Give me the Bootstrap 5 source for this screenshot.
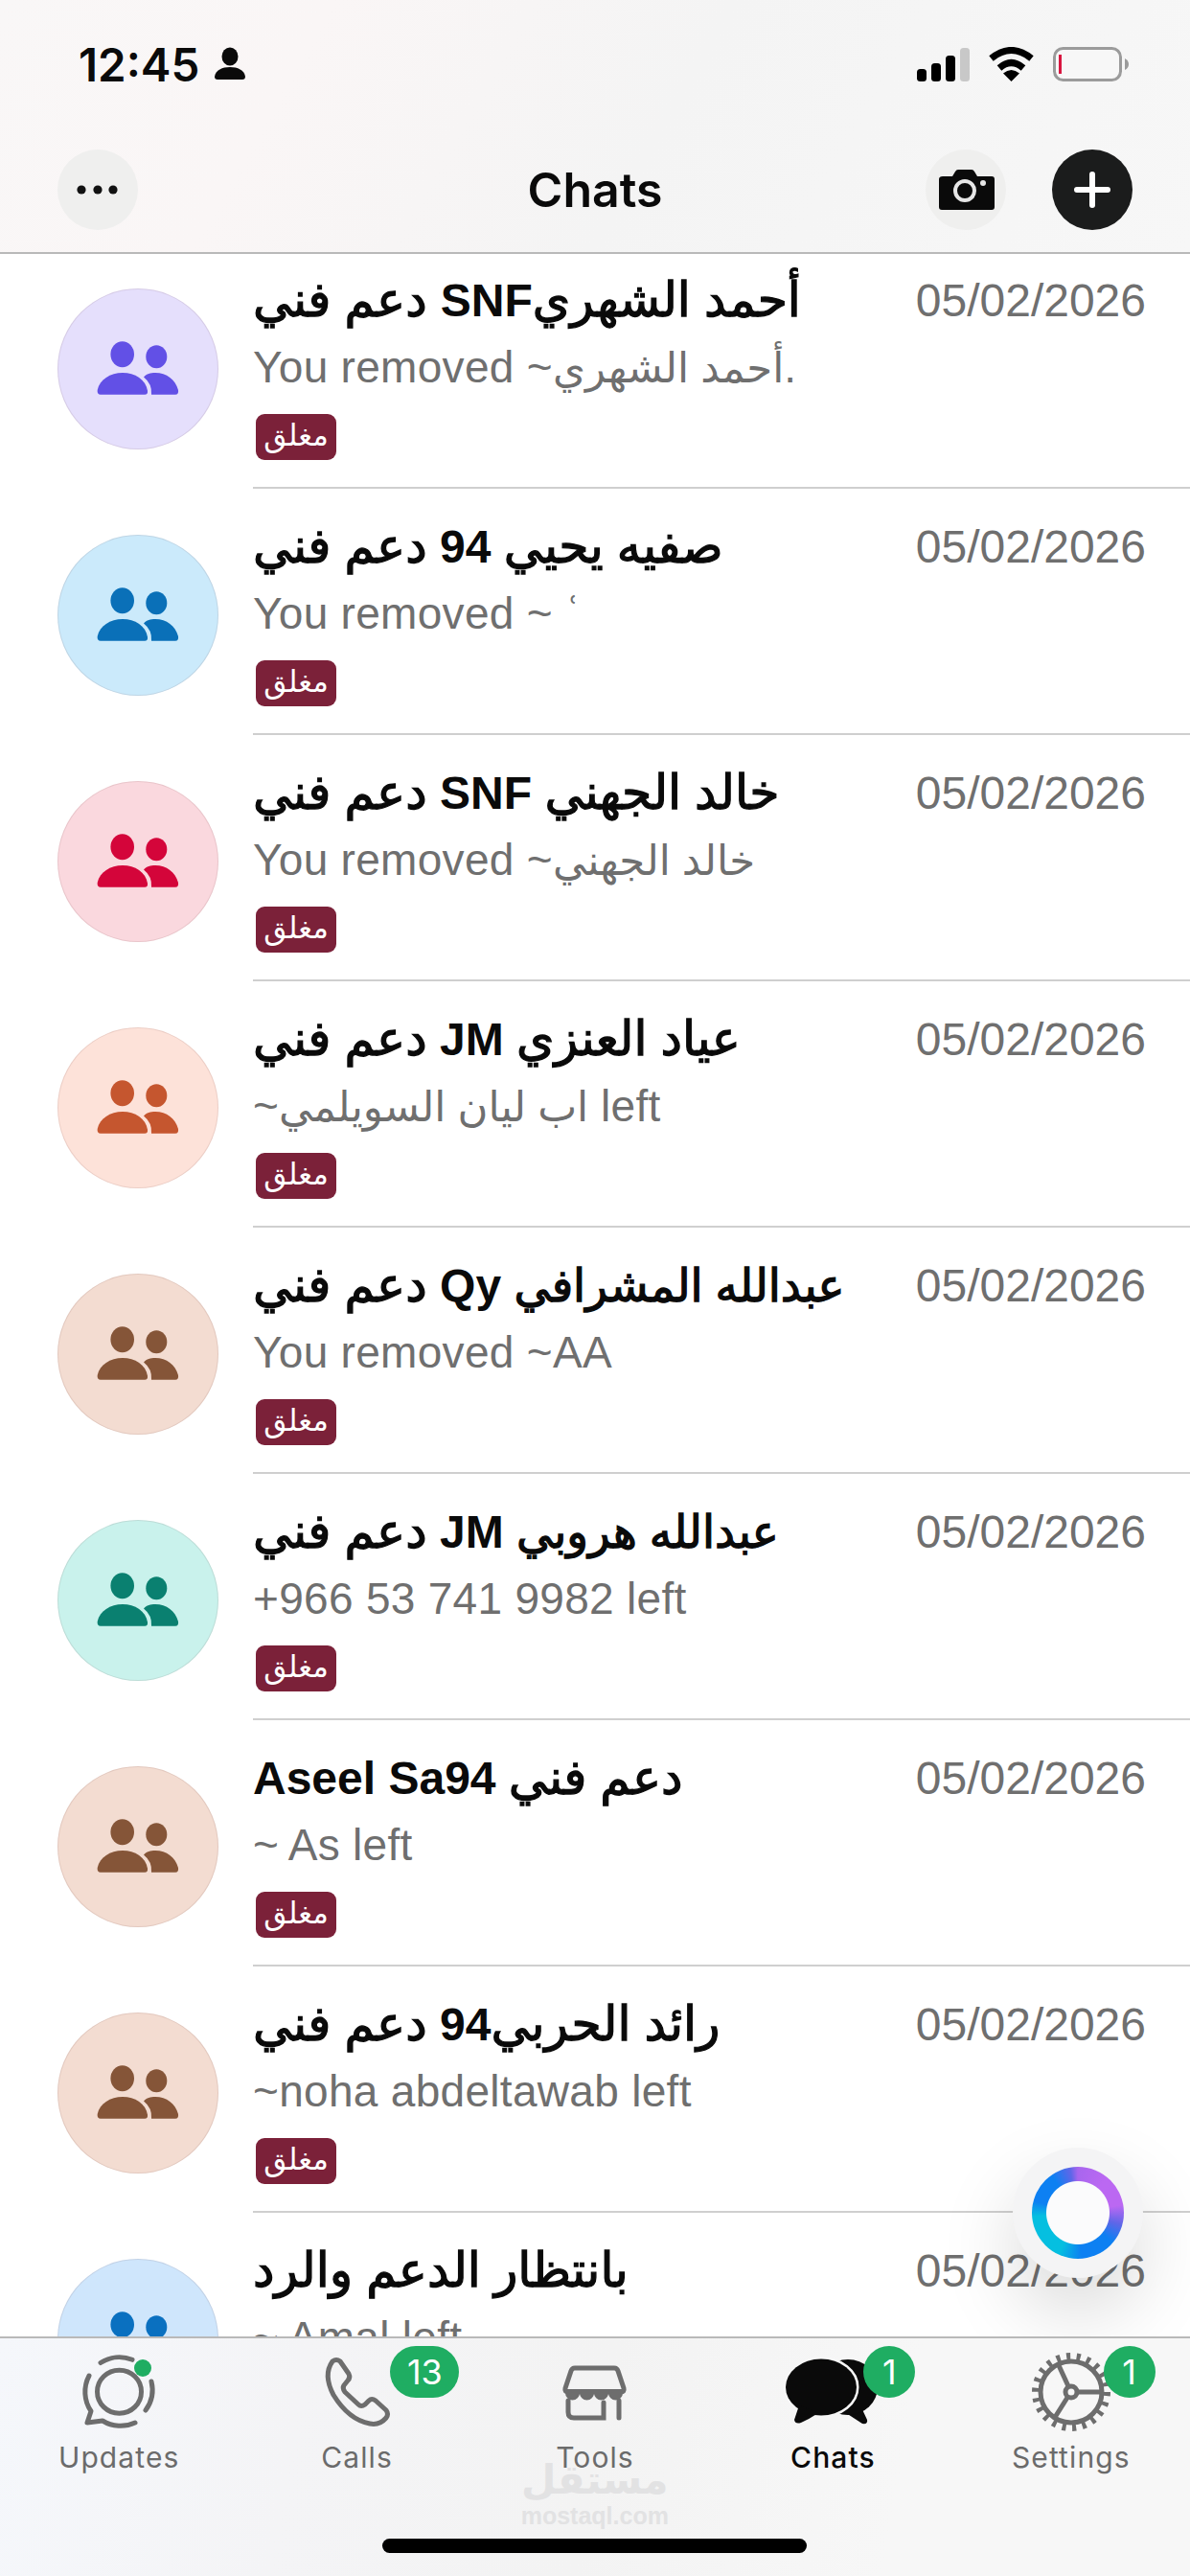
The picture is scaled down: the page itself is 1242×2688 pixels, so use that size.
<!DOCTYPE html>
<html lang="en">
<head>
<meta charset="utf-8">
<title>Chats</title>
<link href="https://cdn.jsdelivr.net/npm/bootstrap@5.3.0/dist/css/bootstrap.min.css" rel="stylesheet">
<style>
html,body{margin:0;background:#fff;}
body{font-family:"Liberation Sans","DejaVu Sans",sans-serif;}
.phone{width:1242px;height:2688px;overflow:hidden;}
.top-bar{height:265px;flex:none;position:relative;z-index:2;background:linear-gradient(120deg,#f9f7f7 0%,#faf6f6 25%,#f4f4f4 55%,#f7f7f7 100%);border-bottom:2px solid #b9b9b9;padding:49px 60px 0;}
.status-row{height:36px;}
.clock{font-family:Inter,sans-serif;font-weight:600;font-size:47.5px;line-height:38px;color:#0a0a0a;width:142px;margin-left:22px;}
.status-icons{gap:20px;margin-right:4px;}
.head-row{margin-top:71px;height:84px;position:relative;}
.round-btn{width:84px;height:84px;border-radius:50%;background:#efefee;flex:none;}
.round-btn.dark{background:#1b1c1c;}
.btn-gap{gap:48px;}
.screen-title{position:absolute;left:0;right:0;top:0;text-align:center;font-family:Inter,"Liberation Sans",sans-serif;font-weight:600;font-size:50px;line-height:84px;color:#0a0a0a;}
.chat-scroll{flex:1 1 0;min-height:0;overflow:hidden;position:relative;margin-top:-12px;}
.chat-row{height:257px;padding:0 0 0 60px;gap:36px;background:#fff;}
.avatar-disc{width:168px;height:168px;border-radius:50%;margin-top:48px;flex:none;box-shadow:inset 0 0 0 1px rgba(90,40,40,.10);}
.avatar-disc svg{display:block;}
.av-purple{background:#e5dffc;color:#6250e6;}
.av-sky{background:#cbeafb;color:#0a70b8;}
.av-red{background:#fad8de;color:#d4053a;}
.av-orange{background:#fde2d9;color:#c5562f;}
.av-brown{background:#f3dcd1;color:#855538;}
.av-teal{background:#c9f2ec;color:#0a8070;}
.av-blue{background:#cfe6fc;color:#0a70c0;}
.row-body{flex:1 1 0;min-width:0;padding:31px 46px 0 0;border-bottom:2px solid #cfcfcf;}
.chat-row:last-child .row-body{border-bottom:0;}
.name-line{font-weight:700;font-size:48px;line-height:60px;color:#0a0a0a;white-space:nowrap;}
.name-ar{font-weight:400;font-size:50.5px;-webkit-text-stroke:1.3px #0a0a0a;line-height:1;}
.name-ar.long-word{font-size:47px;}
.date-text{font-size:48px;line-height:60px;color:#6f6f6f;white-space:nowrap;}
.sub-line{font-size:46px;letter-spacing:.3px;line-height:60px;color:#6f6f6f;margin-top:9px;white-space:nowrap;}
.sub-ar{font-size:43.5px;letter-spacing:0;line-height:1;}
.closed-tag{display:inline-block;width:84px;height:48px;margin-top:19px;margin-left:3px;background:#7b2139;color:#fff;border-radius:9px;font-family:"DejaVu Sans",sans-serif;font-size:31px;font-weight:400;line-height:44px;padding:0;text-align:center;}
.fab{position:absolute;left:1057px;top:1988px;width:136px;height:136px;border-radius:50%;background:#f4f4f5;box-shadow:0 36px 80px rgba(0,0,0,.15);}
.fab-ring{width:96px;height:96px;border-radius:50%;background:radial-gradient(circle,#fbfbfc 32.5px,transparent 33.5px),conic-gradient(#a866ee 0deg,#bb68f2 40deg,#bb68f2 80deg,#5f66e8 105deg,#0d80f2 130deg,#0d80f2 175deg,#05bfe0 205deg,#05bfe0 265deg,#0d80f2 285deg,#0d80f2 325deg,#5f66e8 350deg,#a866ee 360deg);}
.tab-bar{height:250px;flex:none;position:relative;z-index:2;background:linear-gradient(100deg,#f5f7fb 0%,#f4f4f6 25%,#f3f3f3 50%,#f7f7f7 75%,#f7f7f7 100%);border-top:2px solid #b9b9b9;}
.tab-col{height:113px;position:relative;}
.tab-icon{position:absolute;top:0;left:0;width:248px;height:112px;}
.tab-label{position:absolute;left:0;right:0;top:106px;text-align:center;font-family:Inter,sans-serif;font-size:30px;line-height:36px;letter-spacing:1.1px;color:#6b6b6b;}
.tab-label.on{color:#0a0a0a;font-weight:500;}
.count-pill{position:absolute;top:8px;height:54px;min-width:54px;border-radius:27px;background:#1fad62;color:#fff;font-family:Inter,sans-serif;font-size:36px;line-height:54px;text-align:center;font-weight:400;}
.pill-calls{left:159px;width:72px;}
.pill-chats{left:156px;}
.pill-settings{left:158px;}
.home-bar{position:absolute;left:399px;top:209px;width:443px;height:15px;border-radius:8px;background:#000;}
.mark-logo{position:absolute;left:24px;top:124px;width:200px;text-align:center;color:#e2e2e3;pointer-events:none;}
.mark-ar{font-family:"DejaVu Sans",sans-serif;font-weight:700;font-size:42px;line-height:48px;}
.mark-en{font-family:"Liberation Sans",sans-serif;font-weight:700;font-size:25px;line-height:26px;}
</style>
</head>
<body>
<svg width="0" height="0" class="position-absolute">
  <symbol id="people" viewBox="0 0 168 168">
    <ellipse cx="67.7" cy="68.7" rx="12.3" ry="13.5" fill="currentColor"/>
    <ellipse cx="103.3" cy="71.3" rx="11" ry="12" fill="currentColor"/>
    <path fill="currentColor" d="M45 110.7h46q3.5 0 3-4C92 95 81 88 68 88S44 95 41.7 106q-.5 4.7 3.3 4.7z"/>
    <path fill="currentColor" d="M90 92.5C93 89 97 88 102 88c12 0 21 7 24 18q.7 4.7-3 4.7H98q1-11-8-18.2z"/>
  </symbol>
</svg>
<div class="phone d-flex flex-column">
  <header class="top-bar">
    <div class="status-row d-flex align-items-start justify-content-between">
      <div class="d-flex align-items-start">
        <div class="clock">12:45</div>
        <svg width="32" height="34" viewBox="0 0 32 34"><ellipse cx="16" cy="10" rx="8.5" ry="9.5" fill="#0a0a0a"/><path fill="#0a0a0a" d="M3 34Q0 34 0 31C1 24 8 21 16 21s15 3 16 10q0 3-3 3z"/></svg>
      </div>
      <div class="status-icons d-flex align-items-start">
        <svg width="55" height="36" viewBox="0 0 55 36"><rect x="0" y="23" width="10" height="13" rx="3.5" fill="#000"/><rect x="15" y="17" width="10" height="19" rx="3.5" fill="#000"/><rect x="30" y="9" width="10" height="27" rx="3.5" fill="#000"/><rect x="45" y="1" width="10" height="35" rx="3.5" fill="#c8c8c8"/></svg>
        <svg width="47" height="36" viewBox="0 0 47 36"><path d="M2.5 12Q23.5-5 44.5 12" fill="none" stroke="#000" stroke-width="7"/><path d="M11 22Q23.5 11 36 22" fill="none" stroke="#000" stroke-width="7"/><path d="M23.5 36L15 27.5Q23.5 20.5 32 27.5z" fill="#000"/></svg>
        <svg width="79" height="36" viewBox="0 0 79 36"><rect x="1.5" y="1.5" width="69" height="33" rx="9" fill="#f7f7f7" stroke="#9b9b9b" stroke-width="3"/><rect x="6" y="8" width="3" height="20" fill="#d8153f"/><path d="M75 12q4 2 4 6t-4 6z" fill="#9b9b9b"/></svg>
      </div>
    </div>
    <div class="head-row d-flex align-items-center justify-content-between">
      <div class="screen-title">Chats</div>
      <div class="round-btn position-relative">
        <svg width="84" height="84" viewBox="0 0 84 84"><circle cx="25" cy="42" r="4.6" fill="#111"/><circle cx="42" cy="42" r="4.6" fill="#111"/><circle cx="58" cy="42" r="4.6" fill="#111"/></svg>
      </div>
      <div class="d-flex position-relative btn-gap">
        <div class="round-btn">
          <svg width="84" height="84" viewBox="0 0 84 84"><path fill="#0a0a0a" d="M18 28h10l3-5q1-2 3-2h14q2 0 3 2l3 5h15q3 0 3 3v29q0 3-3 3H17q-3 0-3-3V31q0-3 4-3z"/><circle cx="41" cy="43" r="10" fill="none" stroke="#e6e6e6" stroke-width="4"/><circle cx="60" cy="35" r="3" fill="#e6e6e6"/></svg>
        </div>
        <div class="round-btn dark">
          <svg width="84" height="84" viewBox="0 0 84 84"><path d="M42 26v32M26 42h32" stroke="#fff" stroke-width="6" stroke-linecap="round"/></svg>
        </div>
      </div>
    </div>
  </header>

  <main class="chat-scroll">
    <div class="list-group list-group-flush">
      <div class="list-group-item border-0 chat-row d-flex">
        <div class="avatar-disc av-purple"><svg width="168" height="168"><use href="#people"/></svg></div>
        <div class="row-body d-flex justify-content-between align-items-start">
          <div class="d-flex flex-column align-items-start">
            <div class="name-line" dir="rtl"><span class="name-ar">أحمد الشهري</span>SNF<span class="name-ar"> دعم فني</span></div>
            <div class="sub-line" dir="ltr">You removed ~<span class="sub-ar">أحمد الشهري</span>.</div>
            <span class="closed-tag">مغلق</span>
          </div>
          <div class="date-text">05/02/2026</div>
        </div>
      </div>
      <div class="list-group-item border-0 chat-row d-flex">
        <div class="avatar-disc av-sky"><svg width="168" height="168"><use href="#people"/></svg></div>
        <div class="row-body d-flex justify-content-between align-items-start">
          <div class="d-flex flex-column align-items-start">
            <div class="name-line" dir="rtl"><span class="name-ar">صفيه يحيي</span> 94 <span class="name-ar">دعم فني</span></div>
            <div class="sub-line" dir="ltr">You removed ~ ʿ</div>
            <span class="closed-tag">مغلق</span>
          </div>
          <div class="date-text">05/02/2026</div>
        </div>
      </div>
      <div class="list-group-item border-0 chat-row d-flex">
        <div class="avatar-disc av-red"><svg width="168" height="168"><use href="#people"/></svg></div>
        <div class="row-body d-flex justify-content-between align-items-start">
          <div class="d-flex flex-column align-items-start">
            <div class="name-line" dir="rtl"><span class="name-ar">خالد الجهني</span> SNF <span class="name-ar">دعم فني</span></div>
            <div class="sub-line" dir="ltr">You removed ~<span class="sub-ar">خالد الجهني</span></div>
            <span class="closed-tag">مغلق</span>
          </div>
          <div class="date-text">05/02/2026</div>
        </div>
      </div>
      <div class="list-group-item border-0 chat-row d-flex">
        <div class="avatar-disc av-orange"><svg width="168" height="168"><use href="#people"/></svg></div>
        <div class="row-body d-flex justify-content-between align-items-start">
          <div class="d-flex flex-column align-items-start">
            <div class="name-line" dir="rtl"><span class="name-ar">عياد العنزي</span> JM <span class="name-ar">دعم فني</span></div>
            <div class="sub-line" dir="ltr">~<span class="sub-ar">اب ليان السويلمي</span> left</div>
            <span class="closed-tag">مغلق</span>
          </div>
          <div class="date-text">05/02/2026</div>
        </div>
      </div>
      <div class="list-group-item border-0 chat-row d-flex">
        <div class="avatar-disc av-brown"><svg width="168" height="168"><use href="#people"/></svg></div>
        <div class="row-body d-flex justify-content-between align-items-start">
          <div class="d-flex flex-column align-items-start">
            <div class="name-line" dir="rtl"><span class="name-ar long-word">عبدالله المشرافي</span> Qy <span class="name-ar">دعم فني</span></div>
            <div class="sub-line" dir="ltr">You removed ~AA</div>
            <span class="closed-tag">مغلق</span>
          </div>
          <div class="date-text">05/02/2026</div>
        </div>
      </div>
      <div class="list-group-item border-0 chat-row d-flex">
        <div class="avatar-disc av-teal"><svg width="168" height="168"><use href="#people"/></svg></div>
        <div class="row-body d-flex justify-content-between align-items-start">
          <div class="d-flex flex-column align-items-start">
            <div class="name-line" dir="rtl"><span class="name-ar long-word">عبدالله هروبي</span> JM <span class="name-ar">دعم فني</span></div>
            <div class="sub-line" dir="ltr">+966 53 741 9982 left</div>
            <span class="closed-tag">مغلق</span>
          </div>
          <div class="date-text">05/02/2026</div>
        </div>
      </div>
      <div class="list-group-item border-0 chat-row d-flex">
        <div class="avatar-disc av-brown"><svg width="168" height="168"><use href="#people"/></svg></div>
        <div class="row-body d-flex justify-content-between align-items-start">
          <div class="d-flex flex-column align-items-start">
            <div class="name-line" dir="ltr">Aseel Sa94 <span class="name-ar">دعم فني</span></div>
            <div class="sub-line" dir="ltr">~&#8201;As left</div>
            <span class="closed-tag">مغلق</span>
          </div>
          <div class="date-text">05/02/2026</div>
        </div>
      </div>
      <div class="list-group-item border-0 chat-row d-flex">
        <div class="avatar-disc av-brown"><svg width="168" height="168"><use href="#people"/></svg></div>
        <div class="row-body d-flex justify-content-between align-items-start">
          <div class="d-flex flex-column align-items-start">
            <div class="name-line" dir="rtl"><span class="name-ar">رائد الحربي</span>94 <span class="name-ar">دعم فني</span></div>
            <div class="sub-line" dir="ltr">~noha abdeltawab left</div>
            <span class="closed-tag">مغلق</span>
          </div>
          <div class="date-text">05/02/2026</div>
        </div>
      </div>
      <div class="list-group-item border-0 chat-row d-flex">
        <div class="avatar-disc av-blue"><svg width="168" height="168"><use href="#people"/></svg></div>
        <div class="row-body d-flex justify-content-between align-items-start">
          <div class="d-flex flex-column align-items-start">
            <div class="name-line" dir="rtl"><span class="name-ar">بانتظار الدعم والرد</span></div>
            <div class="sub-line" dir="ltr">~&#8201;Amal left</div>
          </div>
          <div class="date-text">05/02/2026</div>
        </div>
      </div>
    </div>
    <div class="fab d-flex align-items-center justify-content-center"><div class="fab-ring"></div></div>
  </main>

  <footer class="tab-bar">
    <div class="row g-0">
      <div class="col tab-col">
        <svg class="tab-icon" viewBox="0 0 248 112"><g transform="translate(85 15)" fill="none" stroke="#6d6d6d" stroke-width="5" stroke-linecap="round" stroke-linejoin="round"><ellipse cx="39.5" cy="40.7" rx="23" ry="22.5"/><path d="M20 10.5A36 36 0 0 1 53 7.3"/><path d="M8 24A36 36 0 0 0 10 61L6 73L22 71A36 36 0 0 0 56 73"/><path d="M73 30A36 36 0 0 1 67 60"/></g><ellipse cx="149" cy="31" rx="9" ry="9" fill="#1fad62"/></svg>
        <div class="tab-label">Updates</div>
      </div>
      <div class="col tab-col">
        <svg class="tab-icon" viewBox="0 0 248 112"><path transform="translate(90 20)" fill="none" stroke="#6d6d6d" stroke-width="5" stroke-linejoin="round" d="M9 4Q13 1 17 4L26 17Q28 21 25 24L21 29Q19 32 22 36L36 49Q39 52 43 49L47 45Q50 42 54 45L65 55Q68 59 65 63Q58 71 48 69Q26 65 10 39Q-1 18 9 4Z"/></svg>
        <div class="tab-label">Calls</div>
        <div class="count-pill pill-calls">13</div>
      </div>
      <div class="col tab-col">
        <svg class="tab-icon" viewBox="0 0 248 112"><g transform="translate(91 29)"><path fill="none" stroke="#6d6d6d" stroke-width="5" stroke-linejoin="round" d="M12 2H53Q56 2 57 5L63 23Q64 27 60 27H5Q1 27 2 23L8 5Q9 2 12 2Z"/><path fill="#6d6d6d" d="M3 24H62V28a7.5 7.5 0 0 1-15 0a7.5 7.5 0 0 1-15 0a7.5 7.5 0 0 1-15 0a7.5 7.5 0 0 1-15 0z"/><path fill="none" stroke="#6d6d6d" stroke-width="5" stroke-linecap="round" d="M5 36V48Q5 54 11 54H42V38M58 36V54"/></g></svg>
        <div class="mark-logo"><div class="mark-ar">مستقل</div><div class="mark-en">mostaql.com</div></div>
        <div class="tab-label">Tools</div>
      </div>
      <div class="col tab-col">
        <svg class="tab-icon" viewBox="0 0 248 112"><g transform="translate(75 20)" fill="#0a0a0a"><path d="M60 56L80 69Q86 70 85 65L78 50z"/><ellipse cx="65" cy="31" rx="31" ry="29"/><ellipse cx="37" cy="31" rx="37" ry="29.5" stroke="#f7f7f7" stroke-width="5" paint-order="stroke"/><path d="M14 50L9 65Q10 70 16 68Q25 64 34 58z"/></g></svg>
        <div class="tab-label on">Chats</div>
        <div class="count-pill pill-chats">1</div>
      </div>
      <div class="col tab-col">
        <svg class="tab-icon" viewBox="0 0 248 112"><g transform="translate(82 14)" fill="none" stroke="#6d6d6d"><circle cx="42" cy="42" r="32" stroke-width="5"/><circle cx="42" cy="42" r="36.5" stroke-width="9" stroke-dasharray="4 6.43"/><circle cx="42" cy="42" r="6" stroke-width="5"/><path stroke-width="5" d="M48 42H74M39 36L28 12M38.5 47L24 70"/></g></svg>
        <div class="tab-label">Settings</div>
        <div class="count-pill pill-settings">1</div>
      </div>
    </div>
    <div class="home-bar"></div>
  </footer>
</div>
<script src="https://cdn.jsdelivr.net/npm/bootstrap@5.3.0/dist/js/bootstrap.bundle.min.js"></script>
</body>
</html>
